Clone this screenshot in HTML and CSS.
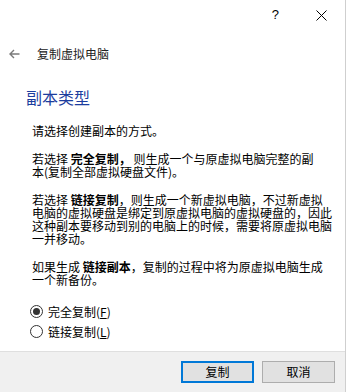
FILE: index.html
```html
<!DOCTYPE html>
<html lang="zh-CN">
<head>
<meta charset="utf-8">
<title>复制虚拟电脑</title>
<link rel="stylesheet" href="styles.css">
</head>
<body>
<div class="window">
  <div class="titlebar">
    <span class="help">?</span>
    <span class="close">
      <svg width="11" height="11" viewBox="0 0 11 11"><path d="M0.5 0.5 L10.5 10.5 M10.5 0.5 L0.5 10.5" stroke="#000" stroke-width="1" fill="none"/></svg>
    </span>
  </div>
  <div class="nav">
    <svg class="back" width="11" height="10" viewBox="0 0 11 10"><path d="M10.5 5 H1 M5 1 L1 5 L5 9" stroke="#7a7a7a" stroke-width="1.4" fill="none"/></svg>
    <span class="nav-title">复制虚拟电脑</span>
  </div>
  <div class="content">
    <h1 class="heading">副本类型</h1>
    <p class="para"><span class="line">请选择创建副本的方式。</span></p>
    <p class="para"><span class="line">若选择 <b>完全复制，</b> 则生成一个与原虚拟电脑完整的副</span><span class="line">本(复制全部虚拟硬盘文件)。</span></p>
    <p class="para"><span class="line">若选择 <b>链接复制</b>，则生成一个新虚拟电脑，不过新虚拟</span><span class="line">电脑的虚拟硬盘是绑定到原虚拟电脑的虚拟硬盘的，因此</span><span class="line">这种副本要移动到别的电脑上的时候，需要将原虚拟电脑</span><span class="line">一并移动。</span></p>
    <p class="para"><span class="line">如果生成 <b>链接副本</b>，复制的过程中将为原虚拟电脑生成</span><span class="line">一个新备份。</span></p>
    <div class="radios">
      <label class="radio"><span class="dot checked"></span><span>完全复制(<u>F</u>)</span></label>
      <label class="radio"><span class="dot"></span><span>链接复制(<u>L</u>)</span></label>
    </div>
  </div>
  <div class="footer">
    <button class="btn default">复制</button>
    <button class="btn">取消</button>
  </div>
</div>
</body>
</html>
```
FILE: styles.css
```css
html, body {
  margin: 0;
  padding: 0;
  background: #fff;
}
body {
  font-family: "Noto Sans CJK SC", "Noto Sans", sans-serif;
  font-size: 12px;
  color: #000;
}
.window {
  width: 345px;
  height: 392px;
  border-right: 1px solid #cfcfcf;
  display: flex;
  flex-direction: column;
  background: #fff;
}
.titlebar {
  height: 30px;
  display: flex;
  align-items: center;
  justify-content: flex-end;
}
.help {
  font-family: "Liberation Sans", sans-serif;
  font-size: 13px;
  line-height: 30px;
  margin-right: 37px;
}
.close {
  display: flex;
  margin-right: 18px;
}
.nav {
  margin-top: 14px;
  height: 20px;
  display: flex;
  align-items: center;
}
.back {
  margin-left: 9px;
}
.nav-title {
  margin-left: 17px;
  font-size: 12px;
  line-height: 20px;
  color: #222;
}
.content {
  flex: 1;
}
.heading {
  margin: 23px 0 17px 26px;
  font-size: 16px;
  line-height: 20px;
  font-weight: normal;
  color: #1c3d9e;
}
.para {
  margin: 0 0 15px 32px;
  display: flex;
  flex-direction: column;
  align-items: flex-start;
}
.line {
  display: block;
  height: 13px;
  line-height: 13px;
  white-space: nowrap;
  overflow: visible;
}
.para b {
  font-weight: bold;
}
.radios {
  margin-top: 13px;
  display: flex;
  flex-direction: column;
}
.radio {
  height: 20px;
  display: flex;
  align-items: center;
  gap: 5px;
  padding-left: 30px;
  font-size: 12px;
}
.dot {
  width: 13px;
  height: 13px;
  box-sizing: border-box;
  border: 1px solid #333;
  border-radius: 50%;
  background: #fff;
  display: flex;
  align-items: center;
  justify-content: center;
}
.dot.checked::after {
  content: "";
  width: 7px;
  height: 7px;
  border-radius: 50%;
  background: #333;
}
.footer {
  height: 41px;
  border-top: 1px solid #dfdfdf;
  background: #f0f0f0;
  display: flex;
  justify-content: flex-end;
  align-items: flex-start;
  gap: 8px;
  padding: 9px 10px 0 0;
  box-sizing: border-box;
}
.btn {
  width: 73px;
  height: 22px;
  box-sizing: border-box;
  border: 1px solid #adadad;
  background: #e1e1e1;
  font-family: "Noto Sans CJK SC", sans-serif;
  font-size: 12px;
  color: #000;
  padding: 0;
  line-height: 18px;
}
.btn.default {
  border: 2px solid #0078d7;
}
```
